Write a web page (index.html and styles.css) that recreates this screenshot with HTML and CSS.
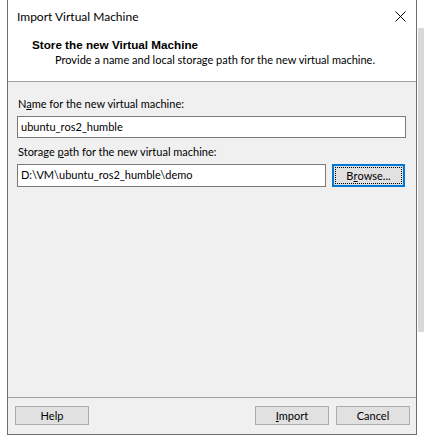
FILE: index.html
```html
<!DOCTYPE html>
<html>
<head>
<meta charset="utf-8">
<link rel="stylesheet" href="styles.css">
</head>
<body>
<div class="screen">
  <div class="dialog">
    <div class="titlebar">
      <span class="title">Import Virtual Machine</span>
      <svg class="close" width="11" height="11" viewBox="0 0 11 11"><path d="M0.5 0.5 L10.5 10.5 M10.5 0.5 L0.5 10.5" stroke="#000" stroke-width="1" fill="none"/></svg>
    </div>
    <div class="header">
      <div class="h-title">Store the new Virtual Machine</div>
      <div class="h-sub">Provide a name and local storage path for the new virtual machine.</div>
    </div>
    <div class="body">
      <div class="label">N<u>a</u>me for the new virtual machine:</div>
      <div class="input full">ubuntu_ros2_humble</div>
      <div class="label second">Storage <u>p</u>ath for the new virtual machine:</div>
      <div class="row">
        <div class="input path">D:\VM\ubuntu_ros2_humble\demo</div>
        <div class="btn focus"><span class="focus-in">B<u>r</u>owse...</span></div>
      </div>
    </div>
    <div class="footer">
      <div class="btn">Help</div>
      <div class="spacer"></div>
      <div class="btn"><span><u>I</u>mport</span></div>
      <div class="btn">Cancel</div>
    </div>
  </div>
  <div class="side"><div class="side-gray"></div></div>
</div>
</body>
</html>
```

FILE: styles.css
```css
html, body {
  margin: 0;
  padding: 0;
  background: #ffffff;
}
body {
  font-family: Lato, "Liberation Sans", Arial, sans-serif;
  font-size: 11px;
  color: #000;
}
.screen {
  display: flex;
  padding-left: 7px;
  width: 424px;
  height: 440px;
  box-sizing: border-box;
}
.dialog {
  width: 410px;
  height: 435px;
  box-sizing: border-box;
  border: 1px solid #6d6d6d;
  border-top: none;
  display: flex;
  flex-direction: column;
  background: #f0f0f0;
}
.titlebar {
  height: 31px;
  background: #fff;
  display: flex;
  align-items: center;
  padding-left: 9px;
  padding-right: 10px;
  box-sizing: border-box;
  font-size: 12px;
}
.title {
  flex: 1;
  padding-top: 1px;
}
.close {
  display: block;
  margin-top: 1px;
}
.header {
  height: 51px;
  background: #fff;
  border-bottom: 1px solid #a0a0a0;
  box-sizing: border-box;
}
.h-title {
  font-family: "Liberation Sans", Arial, sans-serif;
  font-weight: bold;
  font-size: 11.7px;
  padding-left: 24px;
  line-height: 14px;
  padding-top: 7px;
}
.h-sub {
  padding-left: 47px;
  line-height: 15px;
  color: #000;
}
.body {
  flex: 1;
  padding: 15px 10px 0 9px;
  border-bottom: 1px solid #a0a0a0;
}
.label {
  padding-left: 1px;
  line-height: 14px;
  height: 14px;
  margin-bottom: 5px;
}
.label.second {
  margin-top: 7px;
}
.input {
  height: 22px;
  box-sizing: border-box;
  border: 1px solid #7a7a7a;
  background: #fff;
  padding-left: 3px;
  line-height: 19px;
}
.row {
  display: flex;
  gap: 6px;
  align-items: center;
}
.path {
  width: 309px;
  height: 23px;
  line-height: 20px;
}
.btn {
  width: 74px;
  height: 19px;
  box-sizing: border-box;
  background: #e1e1e1;
  border: 1px solid #adadad;
  display: flex;
  align-items: center;
  justify-content: center;
  line-height: 14px;
}
.btn.focus {
  width: 73px;
  height: 23px;
  border: 2px solid #0078d7;
  padding: 1px;
}
.focus-in {
  flex: 1;
  align-self: stretch;
  border: 1px dotted #000;
  display: flex;
  align-items: center;
  justify-content: center;
}
.footer {
  height: 36px;
  display: flex;
  align-items: flex-start;
  padding: 8px 6px 0 7px;
  box-sizing: border-box;
  gap: 7px;
}
.spacer {
  flex: 1;
}
.side {
  flex: 1;
  padding-left: 1px;
}
.side-gray {
  margin-top: 28px;
  height: 304px;
  background: #d9d9d9;
}
```
